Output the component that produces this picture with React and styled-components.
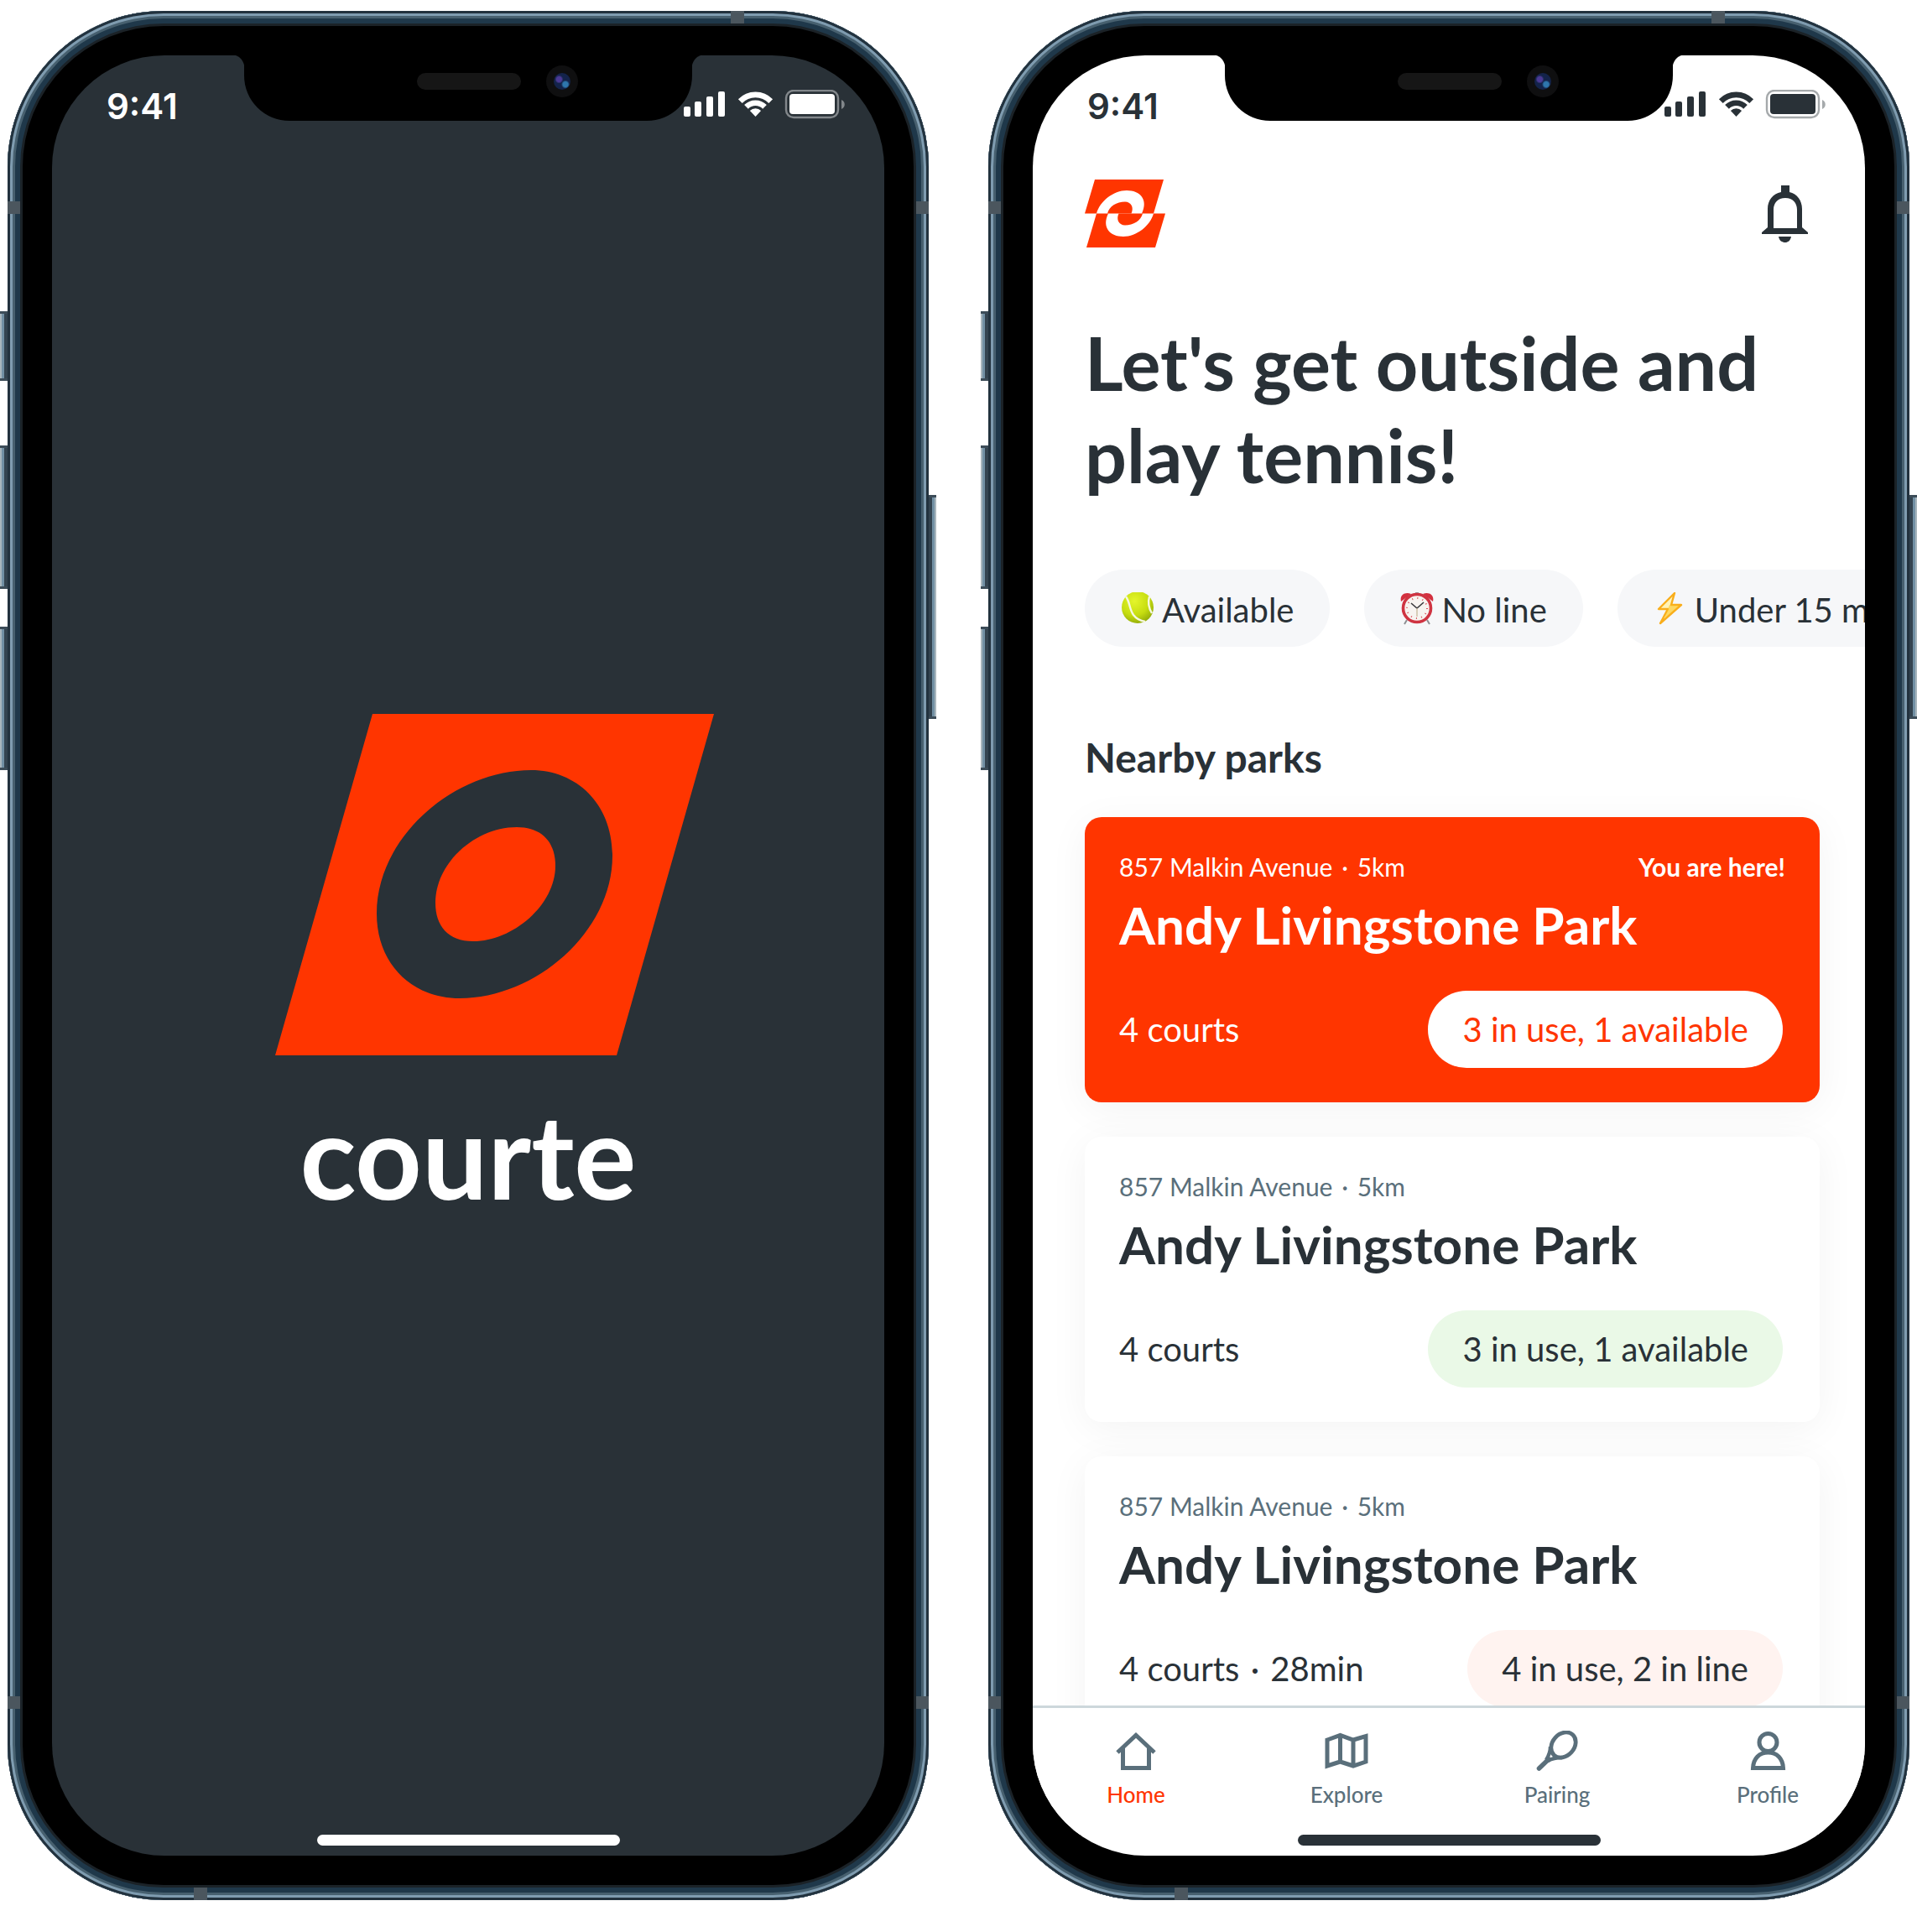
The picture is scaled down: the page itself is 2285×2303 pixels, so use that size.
import React from "react";
import styled, { createGlobalStyle } from "styled-components";

const color = {
  ink: "#293137",
  slate: "#5a6f7b",
  brand: "#ff3500",
  chip: "#f6f7f9",
  line: "#cdd7db",
  green: "#eaf9e7",
  blush: "#fff3f0",
  white: "#ffffff",
};

const GlobalStyle = createGlobalStyle`
  *, *::before, *::after { box-sizing: border-box; }
  body {
    margin: 0;
    background: ${color.white};
    color: ${color.ink};
    font-family: Lato, "Open Sans", sans-serif;
  }
  h1, h2, h3, p, ul { margin: 0; padding: 0; }
  ul { list-style: none; }
  button { font: inherit; color: inherit; border: 0; cursor: pointer; }
  a { color: inherit; text-decoration: none; }
  svg { display: block; flex: none; }
`;

const Page = styled.main`
  display: grid;
  grid-template-columns: repeat(2, minmax(0, 1fr));
  align-items: start;
  column-gap: 53px;
  padding: 13px 0 38px;
`;

/* ---------- device ---------- */

const Device = styled.section`
  position: relative;
  padding: 0 9px;
`;

const Frame = styled.div`
  position: relative;
  aspect-ratio: 1098 / 2252;
  min-height: 0;
  padding: 53px;
  border-radius: 186px;
  background: #000;
  box-shadow:
    inset 0 0 0 3px #22323e,
    inset 0 0 0 6px #7f9cb0,
    inset 0 0 0 9px #47606f,
    inset 0 0 0 15px #1f384a,
    inset 0 0 0 18px #1b2227;
`;

const Screen = styled.div`
  position: relative;
  display: flex;
  flex-direction: column;
  height: 100%;
  overflow: hidden;
  border-radius: 134px;
  background: ${(p) => (p.$dark ? color.ink : color.white)};
  color: ${(p) => (p.$dark ? color.white : color.ink)};
`;

const SideButton = styled.span`
  position: absolute;
  ${(p) => (p.$side === "right" ? "right: 0;" : "left: 0;")}
  top: ${(p) => p.$top}%;
  height: ${(p) => p.$height}%;
  width: 9px;
  border-top: 3px solid #3c4c58;
  border-bottom: 3px solid #3c4c58;
  background: linear-gradient(
    ${(p) => (p.$side === "right" ? "to left" : "to right")},
    #a9b6bd 0 2px,
    #7290a4 2px 5px,
    #344450 5px
  );
`;

const Antenna = styled.span`
  position: absolute;
  background: #4b565e;
  ${(p) =>
    p.$edge === "top" || p.$edge === "bottom"
      ? `${p.$edge}: 0; left: ${p.$at}%; width: 16px; height: 15px;`
      : `${p.$edge}: 0; top: ${p.$at}%; width: 15px; height: 15px;`}
`;

const Notch = styled.div`
  position: absolute;
  z-index: 2;
  top: 0;
  left: 50%;
  transform: translateX(-50%);
  display: flex;
  align-items: center;
  justify-content: flex-end;
  gap: 30px;
  width: 534px;
  height: 78px;
  padding: 0 136px 16px 0;
  border-radius: 0 0 54px 54px;
  background: #000;

  &::before,
  &::after {
    content: "";
    position: absolute;
    top: 0;
    width: 14px;
    height: 16px;
  }
  &::before {
    right: 100%;
    background: radial-gradient(ellipse at 0 100%, transparent 14px, #000 15px);
  }
  &::after {
    left: 100%;
    background: radial-gradient(ellipse at 100% 100%, transparent 14px, #000 15px);
  }
`;

const Speaker = styled.span`
  width: 124px;
  height: 20px;
  border-radius: 10px;
  background: #161616;
`;

const Camera = styled.span`
  display: grid;
  place-items: center;
  width: 38px;
  height: 38px;
  border-radius: 50%;
  background: #0f0f10;

  &::after {
    content: "";
    width: 20px;
    height: 20px;
    border-radius: 50%;
    background:
      radial-gradient(circle at 70% 68%, #2e76ad 0 3px, transparent 5px),
      radial-gradient(circle at 32% 38%, #4a3a94 0 3px, transparent 5px),
      #13234a;
  }
`;

const StatusBar = styled.div`
  display: flex;
  flex: none;
  align-items: flex-start;
  justify-content: space-between;
  height: 148px;
  padding: 41px 46px 0 65px;
`;

const Clock = styled.span`
  font-family: Inter, sans-serif;
  font-size: 42px;
  font-weight: 600;
  line-height: 40px;
`;

const HomeIndicator = styled.span`
  flex: none;
  align-self: center;
  width: 361px;
  height: 13px;
  margin-bottom: 12px;
  border-radius: 7px;
  background: currentColor;
`;

/* ---------- splash ---------- */

const Brand = styled.div`
  display: flex;
  flex: 1;
  flex-direction: column;
  align-items: center;
  padding-top: 637px;
`;

const BrandMark = styled.div`
  padding-left: 62px;
`;

const Wordmark = styled.h1`
  margin-top: 34px;
  font-size: 139px;
  font-weight: 700;
  line-height: 170px;
`;

/* ---------- home ---------- */

const Home = styled.div`
  flex: 1;
  min-height: 0;
  overflow: hidden;
  padding: 0 54px 0 62px;
`;

const Header = styled.header`
  display: flex;
  align-items: center;
  justify-content: space-between;
  padding-right: 13px;
`;

const IconButton = styled.button`
  padding: 0;
  background: none;
`;

const Headline = styled.h1`
  margin-top: 82px;
  font-size: 88px;
  font-weight: 700;
  line-height: 110px;
`;

const Chips = styled.div`
  display: flex;
  gap: 41px;
  margin: 82px -54px 0 0;
  overflow: hidden;
`;

const Chip = styled.button`
  display: flex;
  flex: none;
  align-items: center;
  gap: 9px;
  height: 92px;
  padding: 4px 43px 0;
  border-radius: 46px;
  background: ${color.chip};
  font-size: 40px;
  line-height: 48px;
  white-space: nowrap;
`;

const SectionTitle = styled.h2`
  margin-top: 104px;
  font-size: 48px;
  font-weight: 700;
  line-height: 56px;
`;

const ParkList = styled.ul`
  display: grid;
  gap: 41px;
  margin-top: 43px;
`;

const ParkCard = styled.li`
  padding: 41px;
  border-radius: 20px;
  background: ${(p) => (p.$current ? color.brand : color.white)};
  color: ${(p) => (p.$current ? color.white : color.ink)};
  box-shadow: 0 8px 48px rgba(0, 0, 0, 0.05);
`;

const Meta = styled.p`
  display: flex;
  justify-content: space-between;
  color: ${(p) => (p.$current ? color.white : color.slate)};
  font-size: 30px;
  line-height: 36px;
`;

const Dot = styled.span`
  margin: 0 3px;
`;

const ParkName = styled.h3`
  margin-top: 13px;
  font-size: 62px;
  font-weight: 700;
  line-height: 76px;
`;

const CardFoot = styled.div`
  display: flex;
  align-items: center;
  justify-content: space-between;
  margin-top: 41px;
  padding-right: 3px;
  font-size: 40px;
  line-height: 48px;
`;

const pillColors = {
  current: [color.white, color.brand],
  open: [color.green, color.ink],
  busy: [color.blush, color.ink],
};

const Pill = styled.span`
  padding: 22px 41px;
  border-radius: 46px;
  background: ${(p) => pillColors[p.$tone][0]};
  color: ${(p) => pillColors[p.$tone][1]};
`;

const TabBar = styled.nav`
  display: flex;
  flex: none;
  justify-content: space-between;
  padding: 27px 56px 29px 63px;
  border-top: 3px solid ${color.line};
  background: ${color.white};
`;

const Tab = styled.a`
  display: flex;
  flex-direction: column;
  align-items: center;
  width: 120px;
  gap: 10px;
  color: ${color.slate};
  font-size: 26px;
  font-weight: 500;
  line-height: 37px;
`;

const TabLabel = styled.span`
  color: ${(p) => (p.$active ? color.brand : "inherit")};
`;

/* ---------- drawings ---------- */

const StatusIcons = () => (
  <svg width="194" height="35" viewBox="0 0 194 35" fill="currentColor" role="img" aria-label="Signal, Wi-Fi and battery">
    <rect x="1" y="20" width="8" height="12" rx="2" />
    <rect x="14" y="14" width="8" height="18" rx="2" />
    <rect x="28" y="8" width="8" height="24" rx="2" />
    <rect x="42" y="2" width="8" height="30" rx="2" />
    <g transform="translate(86.5 31)">
      <path d="M-18.2-17.4A25.2 25.2 0 0 1 18.2-17.4M-11-10.6A15.4 15.4 0 0 1 11-10.6" fill="none" stroke="currentColor" strokeWidth="6.6" />
      <path d="M0 1 -6.6-6A9.2 9.2 0 0 1 6.6-6Z" />
    </g>
    <rect x="123" y="1" width="62" height="32" rx="9" fill="none" stroke="currentColor" strokeWidth="2.4" opacity="0.42" />
    <rect x="127" y="5" width="54" height="24" rx="4" />
    <path d="M189 12c5 2 5 9 0 11Z" opacity="0.42" />
  </svg>
);

const CourteMark = () => (
  <svg width="523" height="407" viewBox="0 0 523 407" role="img" aria-label="Courte logo">
    <path
      fill={color.brand}
      fillRule="evenodd"
      d="M116 0H523L407 407H0ZM305 67C214 67 121 146 121 238C121 298 163 339 220 339C310 339 402 260 402 169C402 108 360 67 305 67Z"
    />
    <path fill={color.brand} d="M288 135C318 135 334 153 334 181C334 228 283 271 236 271C206 271 191 253 191 225C191 178 238 135 288 135Z" />
  </svg>
);

const SmallMark = () => {
  const half =
    "M12 0H94L82 40.5H68C76 24 66 13 50 13C34 13 18 26 14 40.5H0ZM27 40.5C29 32 38 26.5 48 26.5C55 26.5 59 33 55.5 40.5Z";
  return (
    <svg width="96" height="81" viewBox="0 0 96 81" fill={color.brand} role="img" aria-label="Courte">
      <path d={half} />
      <path d={half} transform="rotate(180 48 40.5)" />
    </svg>
  );
};

const BellIcon = () => (
  <svg width="56" height="68" viewBox="0 0 56 68" fill="currentColor" aria-hidden="true">
    <path
      fillRule="evenodd"
      d="M23 0H33V8C42 10 48 18 48 28V50L55 56V58H0V56L7 50V28C7 18 13 10 23 8ZM28 15C19 15 14 21 14 29V51H42V29C42 21 37 15 28 15Z"
    />
    <path d="M20 61H35C34 66 31 68 28 68C24 68 21 66 20 61Z" />
  </svg>
);

const BallEmoji = () => (
  <svg width="40" height="42" viewBox="0 0 40 42" aria-hidden="true">
    <defs>
      <radialGradient id="ball" cx="0.4" cy="0.3" r="0.75">
        <stop offset="0" stopColor="#e4f52c" />
        <stop offset="0.6" stopColor="#c6dd10" />
        <stop offset="1" stopColor="#8fa808" />
      </radialGradient>
    </defs>
    <circle cx="20" cy="18" r="19" fill="url(#ball)" />
    <path d="M6 5C11 12 10 20 15 27C18 31 23 34 29 35" fill="none" stroke="#f6f8e0" strokeWidth="2.4" />
    <path d="M34 5C32 12 34 20 37 25" fill="none" stroke="#f6f8e0" strokeWidth="2.4" />
  </svg>
);

const ClockEmoji = () => (
  <svg width="40" height="42" viewBox="0 0 40 42" aria-hidden="true">
    <path d="M8 33 5 38M32 33 35 38" stroke="#8d8f93" strokeWidth="2" />
    <path d="M1 11C-1 3 6-1 13 2ZM39 11C41 3 34-1 27 2Z" fill="#d3303f" />
    <path d="M18 0H22V3H18Z" fill="#9aa0a6" />
    <circle cx="20" cy="19" r="16.5" fill="#f7f4f0" stroke="#cf3442" strokeWidth="3.6" />
    <circle cx="20" cy="19" r="12" fill="none" stroke="#d9505b" strokeWidth="2" strokeDasharray="1 5.28" />
    <path d="M13 13 20 19 28 12" fill="none" stroke="#3a3a3c" strokeWidth="1.6" />
    <path d="M20 19V29" stroke="#c9bda0" strokeWidth="1.4" />
  </svg>
);

const BoltEmoji = () => (
  <svg width="40" height="42" viewBox="0 0 40 42" aria-hidden="true">
    <path
      d="M25 1 6 20H17L8 37 33 15H21Z"
      fill="#fff3b8"
      stroke="#f9ae1c"
      strokeWidth="2.4"
      strokeLinejoin="round"
    />
    <path d="M17 20 19 15 31 16 13 31Z" fill="#fbc11e" opacity="0.55" />
  </svg>
);

const TabIcon = ({ children }) => (
  <svg width="52" height="48" viewBox="0 0 52 48" fill="none" stroke="currentColor" strokeWidth="5" aria-hidden="true">
    {children}
  </svg>
);

const HomeIcon = () => (
  <TabIcon>
    <path d="M4 26 26 5.5 48 26M10.5 20V44.5H41.5V20" />
  </TabIcon>
);

const MapIcon = () => (
  <TabIcon>
    <path d="M3 11 18.5 5.5 34 11 49 6.5V37L34 42 18.5 37 3 42ZM18.5 6V37M34 11V42" />
  </TabIcon>
);

const RacketIcon = () => (
  <TabIcon>
    <ellipse cx="33.5" cy="17" rx="16.5" ry="13" transform="rotate(-48 33.5 17)" strokeWidth="4.8" />
    <path d="M18 19C18 26 16 30 13 35M32 32C25 32 20 33 15 36" strokeWidth="4.4" />
    <path d="M16 34 4.5 45" strokeWidth="5.5" strokeLinecap="round" />
  </TabIcon>
);

const ProfileIcon = () => (
  <TabIcon>
    <circle cx="26.5" cy="14" r="10.5" />
    <path d="M8.5 44.5C9 33 16 26 26.5 26C37 26 44 33 44.5 44.5Z" />
  </TabIcon>
);

/* ---------- data ---------- */

const filters = [
  { label: "Available", Icon: BallEmoji },
  { label: "No line", Icon: ClockEmoji },
  { label: "Under 15 min", Icon: BoltEmoji },
];

const address = ["857 Malkin Avenue", "5km"];

const parks = [
  { id: 1, courts: ["4 courts"], status: "3 in use, 1 available", tone: "current", note: "You are here!" },
  { id: 2, courts: ["4 courts"], status: "3 in use, 1 available", tone: "open" },
  { id: 3, courts: ["4 courts", "28min"], status: "4 in use, 2 in line", tone: "busy" },
];

const tabs = [
  { label: "Home", Icon: HomeIcon, active: true },
  { label: "Explore", Icon: MapIcon },
  { label: "Pairing", Icon: RacketIcon },
  { label: "Profile", Icon: ProfileIcon },
];

const Dotted = ({ parts }) => (
  <span>
    {parts.map((part, i) => (
      <React.Fragment key={part}>
        {i > 0 && <Dot> · </Dot>}
        {part}
      </React.Fragment>
    ))}
  </span>
);

function Phone({ dark, label, children }) {
  return (
    <Device aria-label={label}>
      <SideButton $top={15.9} $height={3.7} />
      <SideButton $top={23} $height={7.6} />
      <SideButton $top={32.6} $height={7.6} />
      <SideButton $side="right" $top={25.6} $height={11.9} />
      <Frame>
        <Antenna $edge="top" $at={78.5} />
        <Antenna $edge="bottom" $at={20.2} />
        <Antenna $edge="left" $at={10.1} />
        <Antenna $edge="right" $at={10.1} />
        <Antenna $edge="left" $at={89.2} />
        <Antenna $edge="right" $at={89.2} />
        <Screen $dark={dark}>
          <Notch>
            <Speaker />
            <Camera />
          </Notch>
          <StatusBar>
            <Clock>9:41</Clock>
            <StatusIcons />
          </StatusBar>
          {children}
          <HomeIndicator />
        </Screen>
      </Frame>
    </Device>
  );
}

export default function App() {
  return (
    <>
      <GlobalStyle />
      <Page>
        <Phone dark label="Splash screen">
          <Brand>
            <BrandMark>
              <CourteMark />
            </BrandMark>
            <Wordmark>courte</Wordmark>
          </Brand>
        </Phone>

        <Phone label="Home screen">
          <Home>
            <Header>
              <SmallMark />
              <IconButton aria-label="Notifications">
                <BellIcon />
              </IconButton>
            </Header>
            <Headline>Let's get outside and play tennis!</Headline>
            <Chips>
              {filters.map(({ label, Icon }) => (
                <Chip key={label}>
                  <Icon />
                  {label}
                </Chip>
              ))}
            </Chips>
            <SectionTitle>Nearby parks</SectionTitle>
            <ParkList>
              {parks.map((park) => {
                const current = park.tone === "current";
                return (
                  <ParkCard key={park.id} $current={current}>
                    <Meta $current={current}>
                      <Dotted parts={address} />
                      {park.note && <strong>{park.note}</strong>}
                    </Meta>
                    <ParkName>Andy Livingstone Park</ParkName>
                    <CardFoot>
                      <Dotted parts={park.courts} />
                      <Pill $tone={park.tone}>{park.status}</Pill>
                    </CardFoot>
                  </ParkCard>
                );
              })}
            </ParkList>
          </Home>
          <TabBar>
            {tabs.map(({ label, Icon, active }) => (
              <Tab key={label} href={"#" + label.toLowerCase()} aria-current={active ? "page" : undefined}>
                <Icon />
                <TabLabel $active={active}>{label}</TabLabel>
              </Tab>
            ))}
          </TabBar>
        </Phone>
      </Page>
    </>
  );
}
